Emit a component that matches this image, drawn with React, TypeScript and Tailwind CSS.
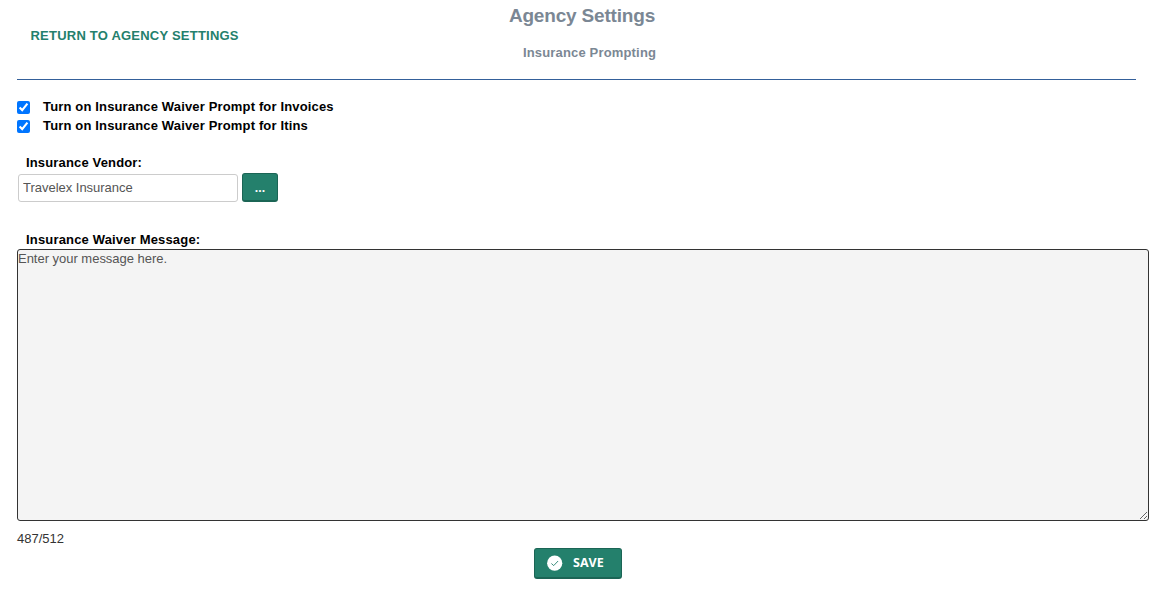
import { useState } from "react";

function Check({ label }: { label: string }) {
  const [on, setOn] = useState(true);
  return (
    <label className="flex h-[19px] items-center text-[13px] font-bold tracking-[0.155px] text-black">
      <input type="checkbox" checked={on} onChange={() => setOn(!on)} className="mt-[2px] mr-[13px] size-[13px] accent-[#0075ff]" />
      <span className="leading-[19px]">{label}</span>
    </label>
  );
}

export default function App() {
  const [vendor, setVendor] = useState("Travelex Insurance");
  const [message, setMessage] = useState("Enter your message here.");
  return (
    <main className="h-[591px] overflow-hidden bg-white font-['Liberation_Sans',Arial,sans-serif] text-[13px]">
      <header className="mr-[30px] ml-[17px] grid h-[80px] grid-cols-[373px_373px_373px] border-b border-[#34609a]">
        <a href="#" className="pt-[26px] pl-[13.5px] text-[13px] leading-[19px] font-bold tracking-[0.22px] whitespace-nowrap text-[#24806c]">
          RETURN TO AGENCY SETTINGS
        </a>
        <div className="text-center font-bold text-[#7b8794]">
          <h1 className="pl-[11px] text-[19px] leading-[32px] tracking-[-0.18px]">Agency Settings</h1>
          <h2 className="mt-[11px] pl-[26px] text-[13px] leading-[19px] tracking-[0.17px]">Insurance Prompting</h2>
        </div>
      </header>
      <section className="mt-[17px] ml-[17px]">
        <Check label="Turn on Insurance Waiver Prompt for Invoices" />
        <Check label="Turn on Insurance Waiver Prompt for Itins" />
      </section>
      <section className="mt-[18px] ml-[18px]">
        <label htmlFor="vendor" className="block pl-[8px] leading-[20px] font-bold tracking-[0.155px] text-black">
          Insurance Vendor:
        </label>
        <div className="flex items-start gap-1">
          <input
            id="vendor"
            value={vendor}
            onChange={(e) => setVendor(e.target.value)}
            className="mt-px h-[28px] w-[220px] rounded-[3px] border border-[#cccccc] bg-white px-[4px] pb-px text-[13px] tracking-[-0.02px] text-[#555555] outline-none"
          />
          <button className="h-[29px] w-[36px] rounded-[3px] border border-b-2 border-[#1b6555] bg-[#24806c] pt-px font-['Open_Sans',sans-serif] text-[12px] leading-[20px] font-bold text-white">
            ...
          </button>
        </div>
      </section>
      <section className="mt-[28px] ml-[17px]">
        <label htmlFor="message" className="block h-[19px] pl-[9px] leading-[20px] font-bold tracking-[0.17px] text-black">
          Insurance Waiver Message:
        </label>
        <textarea
          id="message"
          value={message}
          onChange={(e) => setMessage(e.target.value)}
          className="block h-[272px] w-[1132px] rounded-[3px] border border-[#333333] bg-[#f4f4f4] text-[13px] leading-[17px] tracking-[-0.02px] text-[#555555] outline-none"
        />
        <p className="mt-[8px] leading-[20px] text-[#333333]">487/512</p>
      </section>
      <button className="mt-[-1px] ml-[534px] flex h-[31px] w-[88px] items-center rounded-[3px] border border-b-2 border-[#1b6555] bg-[#24806c] pl-[12px] font-['Open_Sans',sans-serif] text-[12.5px] font-bold text-white">
        <svg viewBox="0 0 16 16" className="mr-[10px] size-[16px]">
          <circle cx="7.7" cy="8.2" r="7.6" fill="white" />
          <path d="M4.4 8.5 6.7 10.6 11.1 6" fill="none" stroke="#24806c" strokeWidth="0.9" />
        </svg>
        SAVE
      </button>
    </main>
  );
}
